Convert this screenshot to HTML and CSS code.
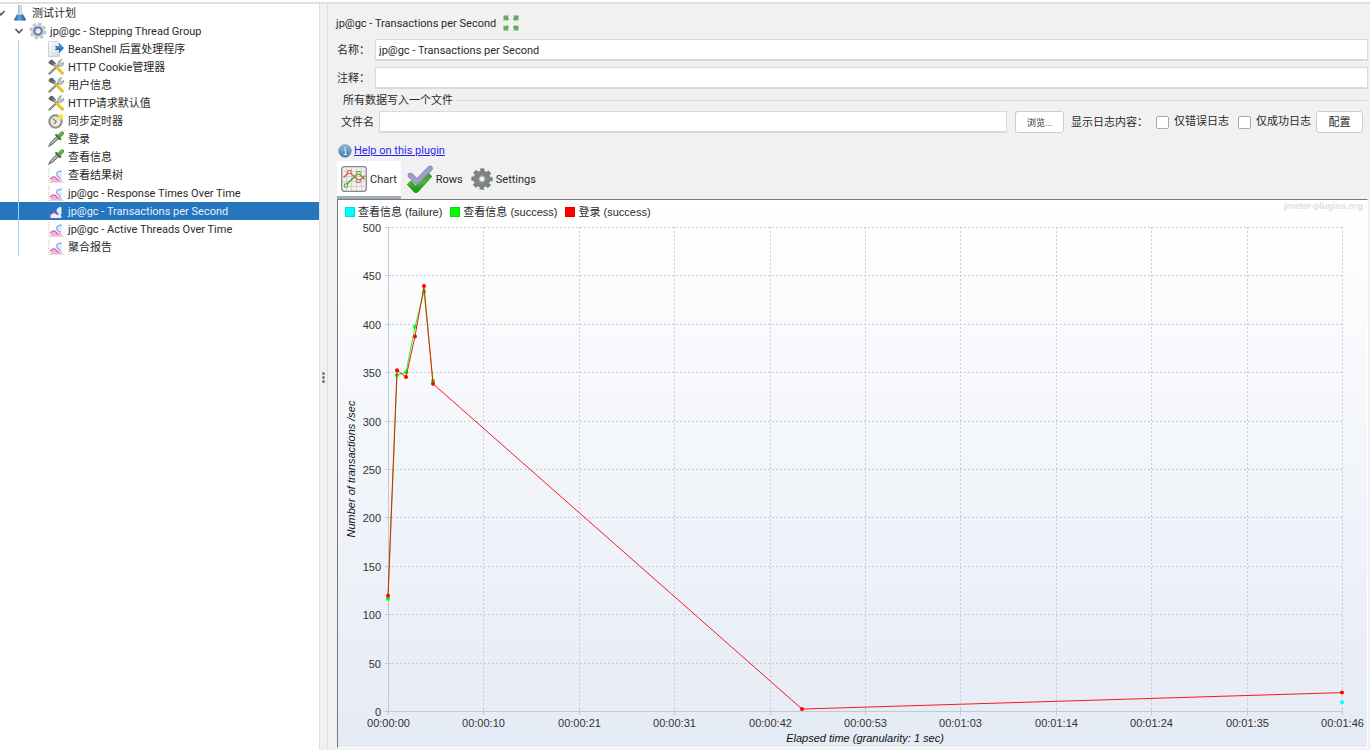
FILE: index.html
```html
<!DOCTYPE html>
<html lang="zh-CN">
<head>
<title>jp@gc - Transactions per Second</title>
<meta http-equiv="content-type" content="text/html; charset=UTF-8">
<link rel="stylesheet" href="styles.css">
<script type="text/javascript" src="chart.js" defer></script>
</head>

<body>
<svg class="defs" aria-hidden="true">
	<defs>
		<linearGradient id="gBlue" x1="0" y1="0" x2="0" y2="1"><stop offset="0" stop-color="#8fb9dd"/><stop offset="1" stop-color="#4379ad"/></linearGradient>
		<linearGradient id="gFlask" x1="0" y1="0" x2="1" y2="0"><stop offset="0" stop-color="#2060a8"/><stop offset=".45" stop-color="#5ba2e6"/><stop offset="1" stop-color="#174f93"/></linearGradient>
		<linearGradient id="gGreen" x1="0" y1="0" x2="0" y2="1"><stop offset="0" stop-color="#3f9a2c"/><stop offset=".5" stop-color="#4dbb35"/><stop offset="1" stop-color="#12a30d"/></linearGradient>
		<linearGradient id="gPage" x1="0" y1="0" x2="1" y2="1"><stop offset="0" stop-color="#fff"/><stop offset="1" stop-color="#d3d3d3"/></linearGradient>
	</defs>
	<symbol id="chevron" viewBox="0 0 10 10"><path d="M1.500 3l3.500 3.800L8.500 3" fill="none" stroke="#555" stroke-width="1.600"/></symbol>
	<symbol id="flask" viewBox="0 0 16 16">
		<path d="M6.500 0h3v6l4 8q.5 1.500-1 1.500h-9q-1.500 0-1-1.500l4-8z" fill="#e2eaf3" stroke="#c5cfda" stroke-width=".5"/>
		<path d="M5 9.500h6l2.600 4.700q.3 1.300-1 1.300H3.400q-1.300 0-1-1.300z" fill="url(#gFlask)"/>
		<path d="M6.500 0h1v8.500h-1z" fill="#86a6c6"/><path d="M9 0h.8v8H9z" fill="#b7c8d8"/>
	</symbol>
	<symbol id="gear" viewBox="0 0 18 18">
		<circle cx="9" cy="9" r="7.200" fill="none" stroke="#c3c5c8" stroke-width="2.600" stroke-dasharray="3.300 2.350"/>
		<circle cx="9" cy="9" r="5.600" fill="#d9dce1" stroke="#cbcdd1" stroke-width="2"/>
		<circle cx="9" cy="9" r="3.700" fill="#e6edf7" stroke="#5474a6" stroke-width="1.800"/>
		<path d="M6.500 10.500a3 3 0 0 1 3-4" fill="none" stroke="#96b2dc" stroke-width="1"/>
	</symbol>
	<symbol id="page" viewBox="0 0 16 16">
		<path d="M.5.500h9l2 2v13H.5z" fill="url(#gPage)" stroke="#c8c8c8" stroke-width=".8"/>
		<path d="M7 5h4V1.800L16 7l-5 5.200V9H7q0-1 1.500-2Q7 6 7 5z" fill="#1f77d0"/>
		<path d="M9 6h3V4l2.500 3" fill="none" stroke="#60aef2" stroke-width=".8"/>
	</symbol>
	<symbol id="tools" viewBox="0 0 16 16">
		<path d="M1.500 14.500L11 5.500" stroke="#777c80" stroke-width="2.400" stroke-linecap="round"/>
		<path d="M1.500 14L10 6" stroke="#c6cacc" stroke-width=".8"/>
		<path d="M10 7q-1-3.500 1-5.300 1.500-1.300 3-1l-1.800 2 .7 1.500 1.600.3 1.300-1.700q.6 2.500-1.300 4T10 7z" fill="#c3c5c6" stroke="#888" stroke-width=".6"/>
		<path d="M.5 3l2.300-2.200 2 .3 3.200 3.700-2.300 2.400L.8 4.500z" fill="#5f666b"/>
		<path d="M5 4.500l4 4" stroke="#999" stroke-width="1.600"/>
		<path d="M9 8.500l5.300 5.500" stroke="#e7b91c" stroke-width="3.200" stroke-linecap="round"/>
		<path d="M9.500 8l5 5.300" stroke="#ffe05a" stroke-width=".8"/>
	</symbol>
	<symbol id="clock" viewBox="0 0 16 16">
		<circle cx="7.500" cy="8.500" r="6.200" fill="#eee9d8" stroke="#838394" stroke-width="2"/>
		<circle cx="7.500" cy="8.500" r="7" fill="none" stroke="#c3c3c9" stroke-width=".5"/>
		<path d="M4.800 5.500l3.500 3-2.600 2.600" fill="none" stroke="#98893d" stroke-width="1.200"/>
		<path d="M12.500 0l1 2 2.300-.6-1 2.100 1.200 1.500-2.100.3-1 2-1.300-1.800-2.400.1 1.200-1.900-.8-2 2.100.4z" fill="#f8e43e"/>
	</symbol>
	<symbol id="pipette" viewBox="0 0 16 16">
		<path d="M.5 15.500l2-4L9 5.200 11 7.300l-6.500 6z" fill="#8f9190" stroke="#666" stroke-width=".8"/>
		<path d="M3 12.500l6.500-6" stroke="#d8dcdc" stroke-width="1"/>
		<path d="M8.300 4.200l3.800 3.800" stroke="#41703a" stroke-width="2.400" stroke-linecap="round"/>
		<path d="M9.300 4.500l3.200-3.500Q14-.5 15.500.7t.2 2.700L12.200 7z" fill="#59a344"/><path d="M11.500 4L14 1.700" stroke="#94cc80"/>
	</symbol>
	<symbol id="graph" viewBox="0 0 16 16">
		<path d="M1 1v14.500h14.500" fill="none" stroke="#aaa" stroke-width=".8" stroke-dasharray="1 1"/>
		<path d="M2.500 15v-3q3-3.500 5-1.500l2 1.500 3-1 2 4z" fill="#f5b3e6"/>
		<path d="M2.500 12q3-3.500 5-1.500l2.500 3" fill="none" stroke="#d76593" stroke-width="1.200"/>
		<path d="M14 4q-5-.5-5.500 3.500.5 3.500 5 4z" fill="#d9edff"/><path d="M14 4.200q-5-.5-5.500 3 .5 3 4 4" fill="none" stroke="#87ace8" stroke-width="1.200"/>
	</symbol>
	<symbol id="graphWhite" viewBox="0 0 16 16">
		<path d="M1 1v14.500h14.500" fill="none" stroke="#5480b2" stroke-width=".8" stroke-dasharray="1 1"/>
		<path d="M2.500 15v-3q3-3.500 5-1.500l2 1.500 3-2 1 5z" fill="#ffe5fb"/>
		<path d="M2.500 12q3-3.500 5-1.500t3.500.5" fill="none" stroke="#cc7bc0"/>
		<path d="M13.500 4q-4-.5-5 3.500.5 3.500 5 4z" fill="#e1f2ff"/>
	</symbol>
	<symbol id="expand" viewBox="0 0 16 16">
		<g fill="#66a962"><path id="ar" d="M.5.500h5.500L4.800 2l1.300 1.900-2.200 2.200L2 4.800.5 6z"/><use href="#ar" transform="matrix(-1 0 0 1 16 0)"/><use href="#ar" transform="matrix(1 0 0 -1 0 16)"/><use href="#ar" transform="matrix(-1 0 0 -1 16 16)"/></g>
	</symbol>
	<symbol id="info" viewBox="0 0 14 14">
		<circle cx="7" cy="7" r="6.300" fill="url(#gBlue)" stroke="#7795b1" stroke-width=".8"/>
		<path d="M5.800 5.800h1.700v4.700M5.500 10.500h3.500" fill="none" stroke="#e3eefa" stroke-width="1"/><circle cx="7" cy="3.700" r=".8" fill="#e3eefa"/>
	</symbol>
	<symbol id="tabChart" viewBox="0 0 26 26">
		<rect x=".7" y=".7" width="24.600" height="24.600" rx="2.500" fill="#f1f1f1" stroke="#888" stroke-width="1.300"/>
		<path d="M5.500 1v24M10.500 1v24M15.500 1v24M20.500 1v24M1 5.500h24M1 10.500h24M1 15.500h24M1 20.500h24" stroke="#c8c8c8" stroke-width=".8"/>
		<path d="M2.500 11.500l6-5.500 9.500 9 6-5.500" fill="none" stroke="#e06353" stroke-width="1.600"/>
		<path d="M4.500 19.500L17.500 7l6 6.500" fill="none" stroke="#65a83e" stroke-width="1.600"/>
		<g fill="#fff" stroke-width="1.200"><path d="M7 4.500h3v3H7zM16 13.500h3v3h-3z" stroke="#e06353"/><path d="M3.500 18h3v3h-3zM16 5.500h3v3h-3z" stroke="#65a83e"/></g>
	</symbol>
	<symbol id="tabRows" viewBox="0 0 28 28">
		<path d="M4 17.500l7 7.500L25 9.500" fill="none" stroke="#27851b" stroke-width="5.800" stroke-linejoin="round"/>
		<path d="M4 17.500l7 7.300L25 9.500" fill="none" stroke="url(#gGreen)" stroke-width="4.800" stroke-linejoin="round"/>
		<path d="M5.500 10.500l6.500 6.300L25 3.300" fill="none" stroke="#7f7cb2" stroke-width="5.400" stroke-linejoin="round" stroke-linecap="round"/>
		<path d="M5.500 10.500l6.500 6.300L25 3.300" fill="none" stroke="#a29ecb" stroke-width="4" stroke-linejoin="round" stroke-linecap="round"/>
	</symbol>
	<symbol id="tabSettings" viewBox="0 0 22 22">
		<circle cx="11" cy="11" r="9" fill="none" stroke="#76807e" stroke-width="3.400" stroke-dasharray="4.200 2.869" stroke-dashoffset="2"/>
		<circle cx="11" cy="11" r="6" fill="none" stroke="#7c8583" stroke-width="5.200"/>
		<circle cx="11" cy="11" r="3.200" fill="#f1f1f1" stroke="#66706e" stroke-width=".8"/>
	</symbol>
</svg>

<div class="window">
	<nav class="tree">
		<div class="row root"><svg class="arrow"><use href="#chevron"/></svg><svg class="icon"><use href="#flask"/></svg>测试计划</div>
		<div class="row group"><svg class="arrow"><use href="#chevron"/></svg><svg class="icon wide"><use href="#gear"/></svg>jp@gc - Stepping Thread Group</div>
		<ul class="children">
			<li class="row"><svg class="icon"><use href="#page"/></svg>BeanShell 后置处理程序</li>
			<li class="row"><svg class="icon"><use href="#tools"/></svg>HTTP Cookie管理器</li>
			<li class="row"><svg class="icon"><use href="#tools"/></svg>用户信息</li>
			<li class="row"><svg class="icon"><use href="#tools"/></svg>HTTP请求默认值</li>
			<li class="row"><svg class="icon"><use href="#clock"/></svg>同步定时器</li>
			<li class="row"><svg class="icon"><use href="#pipette"/></svg>登录</li>
			<li class="row"><svg class="icon"><use href="#pipette"/></svg>查看信息</li>
			<li class="row"><svg class="icon"><use href="#graph"/></svg>查看结果树</li>
			<li class="row"><svg class="icon"><use href="#graph"/></svg>jp@gc - Response Times Over Time</li>
			<li class="row selected"><svg class="icon"><use href="#graphWhite"/></svg>jp@gc - Transactions per Second</li>
			<li class="row"><svg class="icon"><use href="#graph"/></svg>jp@gc - Active Threads Over Time</li>
			<li class="row"><svg class="icon"><use href="#graph"/></svg>聚合报告</li>
		</ul>
	</nav>
	<div class="splitter"><i></i><i></i><i></i></div>

	<main class="main">
		<div class="title">jp@gc - Transactions per Second <svg class="icon"><use href="#expand"/></svg></div>
		<div class="field"><label for="name">名称：</label><input type="text" id="name" value="jp@gc - Transactions per Second"></div>
		<div class="field"><label for="comment">注释：</label><input type="text" id="comment"></div>
		<fieldset>
			<legend>所有数据写入一个文件</legend>
			<div class="file-row">
				<label for="filename">文件名</label>
				<input type="text" id="filename">
				<button type="button" class="browse">浏览...</button>
				<span class="log-title">显示日志内容：</span>
				<label class="check"><input type="checkbox" name="errors">仅错误日志</label>
				<label class="check"><input type="checkbox" name="success">仅成功日志</label>
				<button type="button">配置</button>
			</div>
		</fieldset>
		<div class="help"><svg><use href="#info"/></svg><a href="#help">Help on this plugin</a></div>
		<div class="tabs">
			<button type="button" class="active"><svg class="tab-chart"><use href="#tabChart"/></svg>Chart</button>
			<button type="button"><svg class="tab-rows"><use href="#tabRows"/></svg>Rows</button>
			<button type="button"><svg class="tab-settings"><use href="#tabSettings"/></svg>Settings</button>
		</div>
		<section class="chart">
			<div class="legend">
				<span><i class="cyan"></i>查看信息 (failure)</span>
				<span><i class="green"></i>查看信息 (success)</span>
				<span><i class="red"></i>登录 (success)</span>
				<small>jmeter-plugins.org</small>
			</div>
			<div class="plot"><svg id="plot"></svg></div>
		</section>
	</main>
</div>
</body>
</html>
```
FILE: styles.css
```css
* 				{ box-sizing: border-box; }
body			{ margin: 0; background: #fff; color: #2a2a2a; font-size: 11px; line-height: 18px; font-family: Roboto, "Noto Sans CJK SC", sans-serif; }
.defs			{ position: absolute; width: 0; height: 0; }
.window			{ display: flex; height: 100vh; padding: 2px 2px 3px 0; }
input, button	{ font: inherit; color: inherit; }

/* test plan tree */
.tree			{ width: 319px; flex: none; border-top: 2px solid #e0e0e0; overflow: hidden; }
.row			{ display: flex; align-items: center; height: 18px; gap: 4px; padding: 2px 0 0 48px; white-space: nowrap; }
.row svg		{ flex: none; margin-bottom: 2px; }
.row.root		{ padding-left: 12px; position: relative; }
.row.root .arrow	{ position: absolute; left: -4px; }
.row.group		{ padding-left: 14px; gap: 3px; }
.row.selected	{ background: #2675bf; color: #e6effa; }
.arrow			{ width: 10px; height: 10px; }
.icon			{ width: 16px; height: 16px; }
.icon.wide		{ width: 18px; height: 18px; margin-left: 2px; }
.children		{ list-style: none; margin: 0; padding: 0; position: relative; }
.children::before	{ content: ""; position: absolute; left: 18px; top: 0; bottom: 0; width: 1px; background: #a5cef5; }

.splitter		{ width: 9px; flex: none; display: flex; flex-direction: column; align-items: center; justify-content: center; gap: 1px; background: #f1f1f1; border: solid #e0e0e0; border-width: 2px 1px 0; }
.splitter i		{ width: 3px; height: 3px; border-radius: 50%; background: #777; }

.main			{ flex: 1; min-width: 0; display: flex; flex-direction: column; padding: 8px 2px 2px 8px; background: #f1f1f1; border-top: 2px solid #e0e0e0; }
.title			{ display: flex; align-items: center; gap: 7px; height: 22px; padding-top: 2px; margin-bottom: 5px; }
.title svg		{ margin-bottom: 2px; }
.field			{ display: flex; align-items: center; margin-bottom: 6px; }
.field label	{ width: 39px; padding: 2px 0 0 1px; white-space: nowrap; }
input[type="text"]	{ flex: 1; min-width: 0; height: 22px; padding: 1px 3px 0; background: #fff; border: 1px solid #dadada; border-width: 1px 1px 2px; outline: 0; }
fieldset		{ margin: -3px 1px 0 4px; padding: 0; border: 0; border-top: 1px solid #d9d9d9; min-width: 0; }
legend			{ padding: 1px 2px 0; margin-left: 1px; line-height: 16px; }
.file-row		{ display: flex; align-items: center; padding: 2px 4px 0 1px; white-space: nowrap; }
.file-row > label:first-child	{ width: 38px; padding-top: 2px; }
button			{ height: 22px; width: 47px; padding: 1px 0 0; background: #fff; border: 1px solid #ccc; border-radius: 3px; }
.browse			{ width: 49px; margin: 0 7px 0 8px; font-size: 9px; }
.log-title		{ width: 85px; padding-top: 2px; }
.check			{ display: flex; align-items: center; gap: 5px; width: 82px; }
.check + button	{ margin-left: -4px; }
input[type="checkbox"]	{ appearance: none; width: 13px; height: 13px; margin: 0; background: #fff; border: 1px solid #aaa; border-radius: 2px; }
.help			{ display: flex; align-items: center; gap: 2px; margin: 9px 0 1px 2px; }
.help svg		{ width: 14px; height: 14px; }
.help a			{ color: #2a1ff0; }

.tabs			{ display: flex; margin-left: 1px; }
.tabs button	{ display: flex; align-items: center; gap: 3px; width: auto; height: 38px; padding: 2px 4px 0; border: 0; border-bottom: 3px solid transparent; border-radius: 0; background: none; }
.tabs svg		{ margin-bottom: 2px; }
.tabs .active	{ background: #fff; border-color: #a0aabd; }
.tab-chart		{ width: 26px; height: 26px; }
.tab-rows		{ width: 28px; height: 28px; }
.tab-settings	{ width: 22px; height: 22px; }

/* chart */
.chart			{ flex: 1; min-height: 0; display: flex; flex-direction: column; margin-left: 1px; border: 1px solid #777; border-right-color: #fff; border-bottom-color: #fff; background: linear-gradient(#fff, #e5ebf5); }
.legend			{ display: flex; align-items: center; gap: 8px; height: 22px; padding: 2px 4px 0 7px; font-family: "Liberation Sans", "Noto Sans CJK SC", sans-serif; }
.legend span	{ display: flex; align-items: center; gap: 3px; white-space: pre; }
.legend i		{ width: 10px; height: 10px; outline: 1px solid #0002; outline-offset: -1px; }
.legend small	{ align-self: flex-start; margin-left: auto; color: #dcdfe6; font-size: 9px; font-weight: bold; line-height: 8px; }
.cyan			{ background: #0ff; }
.green			{ background: #0f0; }
.red			{ background: #f00; }
.plot			{ flex: 1; min-height: 0; }
#plot			{ display: block; width: 100%; height: 100%; overflow: visible; font: 11px "Liberation Sans", sans-serif; fill: #333; }
.grid			{ stroke: #c3c9d3; fill: none; }
.grid.dashed	{ stroke: #c8cdd7; stroke-dasharray: 2 2; }
.axis-title		{ font-style: italic; fill: #111; }
.line			{ fill: none; stroke-width: 1; stroke-opacity: 0.9; }
```
FILE: chart.js
```js
var NS = "http://www.w3.org/2000/svg";
var svg = document.getElementById("plot");
var maxTime = 106;
var maxValue = 500;
var timeLabels = ["00:00:00", "00:00:10", "00:00:21", "00:00:31", "00:00:42", "00:00:53", "00:01:03", "00:01:14", "00:01:24", "00:01:35", "00:01:46"];
var series = [
	{ color: "#00ffff", points: [[106, 9]] },
	{ color: "#00ff00", points: [[0, 116], [1, 347], [2, 350], [3, 397], [4, 433], [5, 341]] },
	{ color: "#ff0000", points: [[0, 119], [1, 352], [2, 345], [3, 387], [4, 439], [5, 338], [46, 2], [106, 19]] }
];

function add(tag, attrs, text) {
	var el = document.createElementNS(NS, tag);
	for (var key in attrs) el.setAttribute(key, attrs[key]);
	if (text) el.textContent = text;
	svg.appendChild(el);
}

function drawChart() {
	var box = svg.getBoundingClientRect();
	var left = 50, right = Math.round(box.width) - 25;
	var top = 5, bottom = Math.round(box.height) - 36;
	svg.textContent = "";

	function px(time) { return left + (right - left) * time / maxTime; }
	function py(value) { return bottom - (bottom - top) * value / maxValue; }
	function line(x1, y1, x2, y2, cls) {
		add("path", { d: "M" + x1 + " " + y1 + "L" + x2 + " " + y2, "class": cls });
	}

	for (var v = 0; v <= maxValue; v += 50) {
		var y = Math.round(py(v)) + 0.5;
		line(left - 3, y, left + 3, y, "grid");
		line(left, y, right, y, v ? "grid dashed" : "grid");
		add("text", { x: left - 7, y: y + 4, "text-anchor": "end" }, String(v));
	}
	for (var i = 0; i < timeLabels.length; i++) {
		var x = Math.round(left + (right - left) * i / 10) + 0.5;
		line(x, bottom - 3, x, bottom + 4, "grid");
		line(x, top, x, bottom, i ? "grid dashed" : "grid");
		add("text", { x: x, y: bottom + 16, "text-anchor": "middle" }, timeLabels[i]);
	}
	add("text", { x: (left + right) / 2, y: bottom + 31, "text-anchor": "middle", "class": "axis-title" }, "Elapsed time (granularity: 1 sec)");
	add("text", { transform: "translate(17 " + (top + bottom) / 2 + ") rotate(-90)", "text-anchor": "middle", "class": "axis-title" }, "Number of transactions /sec");

	series.forEach(function(s) {
		var d = s.points.map(function(p) { return px(p[0]) + "," + py(p[1]); }).join(" ");
		add("polyline", { points: d, "class": "line", stroke: s.color });
		s.points.forEach(function(p) {
			add("circle", { cx: px(p[0]), cy: py(p[1]), r: 2, fill: s.color });
		});
	});
}

drawChart();
window.addEventListener("resize", drawChart);
```
